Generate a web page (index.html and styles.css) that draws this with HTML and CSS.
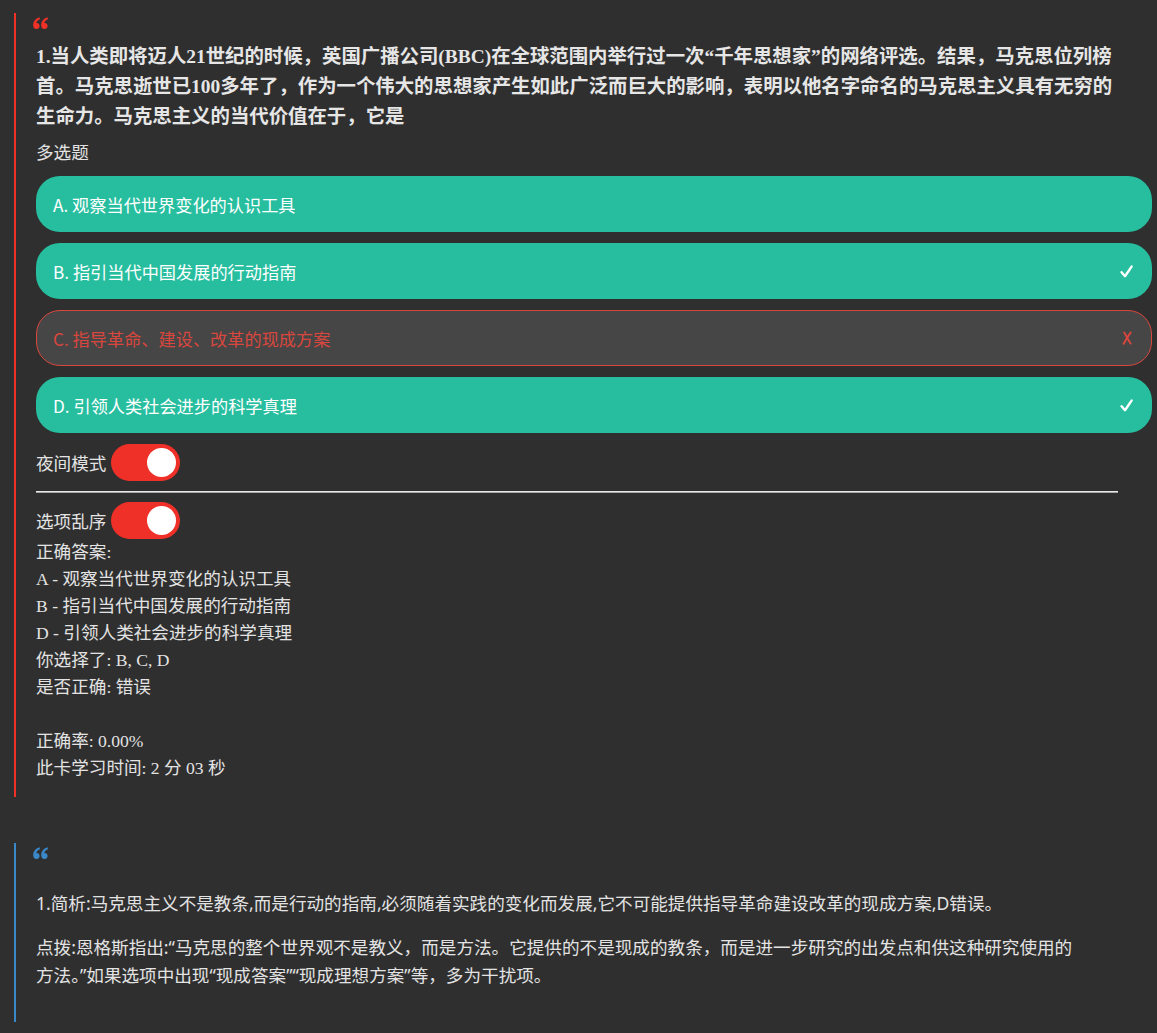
FILE: index.html
```html
<!DOCTYPE html>
<html lang="zh-CN">
<head>
<meta charset="utf-8">
<title>卡片</title>
<link rel="stylesheet" href="styles.css">
</head>
<body>
<div class="page">
  <blockquote class="q q-red">
    <svg class="qicon" width="15" height="12" viewBox="0 0 15 12" aria-hidden="true">
      <path d="M6.6 0.3C3.2 1.2 0.2 3.9 0.2 8.2C0.2 10.6 1.5 12 3.4 12C5.3 12 6.6 10.8 6.6 9C6.6 7.3 5.4 6.1 3.8 6.1C3.6 6.1 3.4 6.1 3.2 6.2C3.6 4.3 4.9 2.9 6.9 2.2Z"/>
      <path d="M14.6 0.3C11.2 1.2 8.2 3.9 8.2 8.2C8.2 10.6 9.5 12 11.4 12C13.3 12 14.6 10.8 14.6 9C14.6 7.3 13.4 6.1 11.8 6.1C11.6 6.1 11.4 6.1 11.2 6.2C11.6 4.3 12.9 2.9 14.9 2.2Z"/>
    </svg>
    <div class="title">1.当人类即将迈人21世纪的时候，英国广播公司(BBC)在全球范围内举行过一次“千年思想家”的网络评选。结果，马克思位列榜首。马克思逝世已100多年了，作为一个伟大的思想家产生如此广泛而巨大的影响，表明以他名字命名的马克思主义具有无穷的生命力。马克思主义的当代价值在于，它是</div>
    <div class="qtype">多选题</div>
    <ul class="options">
      <li class="opt opt-ok"><span>A. 观察当代世界变化的认识工具</span></li>
      <li class="opt opt-ok"><span>B. 指引当代中国发展的行动指南</span>
        <svg class="mark" width="13" height="13" viewBox="0 0 13 13" aria-hidden="true"><path d="M1.6 7.2 L5 11.2 L11.6 1.6" fill="none" stroke="#ffffff" stroke-width="2.4" stroke-linecap="round" stroke-linejoin="round"/></svg></li>
      <li class="opt opt-bad"><span>C. 指导革命、建设、改革的现成方案</span>
        <svg class="mark" width="11" height="14" viewBox="0 0 11 14" aria-hidden="true"><path d="M2.2 1.5 C4 4.5 6 8.5 8.6 12.6 M8.8 1.4 C6.4 4.6 4 8.6 1.6 12.8" fill="none" stroke="#d9463e" stroke-width="1.9" stroke-linecap="round"/></svg></li>
      <li class="opt opt-ok"><span>D. 引领人类社会进步的科学真理</span>
        <svg class="mark" width="13" height="13" viewBox="0 0 13 13" aria-hidden="true"><path d="M1.6 7.2 L5 11.2 L11.6 1.6" fill="none" stroke="#ffffff" stroke-width="2.4" stroke-linecap="round" stroke-linejoin="round"/></svg></li>
    </ul>
    <div class="toggle-row"><span>夜间模式</span><span class="switch"><span class="knob"></span></span></div>
    <hr class="rule">
    <div class="toggle-row"><span>选项乱序</span><span class="switch"><span class="knob"></span></span></div>
    <div class="result">
      <div>正确答案:</div>
      <div>A - 观察当代世界变化的认识工具</div>
      <div>B - 指引当代中国发展的行动指南</div>
      <div>D - 引领人类社会进步的科学真理</div>
      <div>你选择了: B, C, D</div>
      <div>是否正确: 错误</div>
      <div class="blank"></div>
      <div>正确率: 0.00%</div>
      <div>此卡学习时间: 2 分 03 秒</div>
    </div>
  </blockquote>

  <blockquote class="q q-blue">
    <svg class="qicon" width="15" height="12" viewBox="0 0 15 12" aria-hidden="true">
      <path d="M6.6 0.3C3.2 1.2 0.2 3.9 0.2 8.2C0.2 10.6 1.5 12 3.4 12C5.3 12 6.6 10.8 6.6 9C6.6 7.3 5.4 6.1 3.8 6.1C3.6 6.1 3.4 6.1 3.2 6.2C3.6 4.3 4.9 2.9 6.9 2.2Z"/>
      <path d="M14.6 0.3C11.2 1.2 8.2 3.9 8.2 8.2C8.2 10.6 9.5 12 11.4 12C13.3 12 14.6 10.8 14.6 9C14.6 7.3 13.4 6.1 11.8 6.1C11.6 6.1 11.4 6.1 11.2 6.2C11.6 4.3 12.9 2.9 14.9 2.2Z"/>
    </svg>
    <p class="expl first">1.简析:马克思主义不是教条,而是行动的指南,必须随着实践的变化而发展,它不可能提供指导革命建设改革的现成方案,D错误。</p>
    <p class="expl">点拨:恩格斯指出:“马克思的整个世界观不是教义，而是方法。它提供的不是现成的教条，而是进一步研究的出发点和供这种研究使用的方法。”如果选项中出现“现成答案”“现成理想方案”等，多为干扰项。</p>
  </blockquote>
</div>
</body>
</html>
```

FILE: styles.css
```css
html, body {
  margin: 0;
  padding: 0;
  background: #2f2f2f;
}

body {
  color: #e3e3e3;
  font-family: "Liberation Serif", "Noto Sans CJK SC", serif;
  font-size: 17.6px;
}

.page {
  padding: 13px 39px 0 14px;
}

.q {
  margin: 0;
  padding: 4px 0 0 20px;
  border-left: 2px solid #ef3128;
}

.q-red {
  padding-bottom: 15px;
}

.q-blue {
  margin-top: 46px;
  border-left-color: #3a88c8;
  padding-bottom: 33px;
  padding-right: 32px;
}

.qicon {
  display: block;
  margin-left: -3px;
}

.q-red .qicon { fill: #ef3128; }
.q-blue .qicon { fill: #3a88c8; }

.title {
  margin-top: 13px;
  font-size: 19.4px;
  line-height: 30px;
  font-weight: bold;
  color: #e6e6e6;
}

.qtype {
  margin-top: 8px;
  line-height: 27px;
}

.options {
  list-style: none;
  margin: 9px -34px 0 0;
  padding: 0;
}

.opt {
  display: flex;
  align-items: center;
  justify-content: space-between;
  height: 56px;
  box-sizing: border-box;
  padding: 0 19px 0 17px;
  margin-bottom: 11px;
  border-radius: 24px;
  font-family: "Noto Sans CJK SC", "Noto Sans", sans-serif;
  font-size: 17.2px;
  color: #ffffff;
}

.opt-ok {
  background: #27be9f;
}

.opt-bad {
  background: #464646;
  border: 1px solid #d9463e;
  color: #d9463e;
  padding-left: 16px;
  padding-right: 18px;
}

.mark {
  display: block;
  flex: none;
}

.toggle-row {
  display: flex;
  align-items: center;
  gap: 5px;
  height: 37px;
}

.switch {
  position: relative;
  display: inline-block;
  width: 69px;
  height: 37px;
  border-radius: 19px;
  background: #ef3028;
}

.knob {
  position: absolute;
  top: 4px;
  right: 4px;
  width: 29px;
  height: 29px;
  border-radius: 50%;
  background: #ffffff;
}

.rule {
  margin: 10px 0 9px 0;
  height: 0;
  border: 0;
  border-top: 1px solid #e8e8e8;
  border-bottom: 1px solid #a8a8a8;
}

.result {
  line-height: 27px;
}

.blank {
  height: 27px;
}

.expl {
  margin: 16px 0 0 0;
  font-family: "Noto Sans", "Noto Sans CJK SC", sans-serif;
  font-size: 17.6px;
  line-height: 28px;
  color: #e3e3e3;
}

.expl.first {
  margin-top: 30px;
}
```
